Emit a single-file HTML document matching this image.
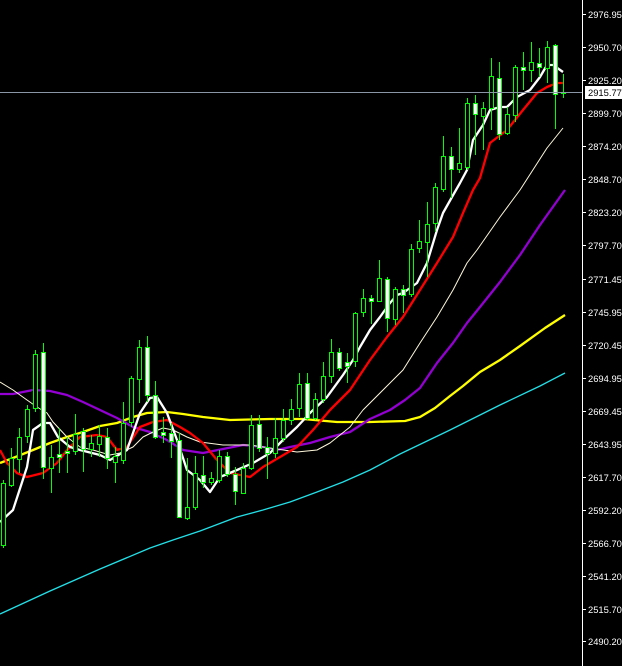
<!DOCTYPE html>
<html><head><meta charset="utf-8"><style>
html,body{margin:0;padding:0;background:#000;width:622px;height:666px;overflow:hidden}
svg{display:block}
text{font-family:"Liberation Sans","DejaVu Sans",sans-serif;font-size:9.4px;fill:#fff}
#cd,#ax{shape-rendering:crispEdges}
</style></head><body>
<svg id="s" width="622" height="666" xmlns="http://www.w3.org/2000/svg">
<rect width="622" height="666" fill="#000"/>
<g id="ma"></g>
<g id="cd"></g>
<line x1="0" y1="92.5" x2="582" y2="92.5" stroke="#8a95a5" stroke-width="1"/>
<line x1="582.5" y1="0" x2="582.5" y2="666" stroke="#fff" stroke-width="1"/>
<g id="ax"></g>
<rect x="585" y="86" width="37" height="13" fill="#fff"/>
<text x="588" y="96" style="fill:#000">2915.77</text>
</svg>
<script>
var NS="http://www.w3.org/2000/svg";
function el(p,t,a){var e=document.createElementNS(NS,t);for(var k in a)e.setAttribute(k,a[k]);p.appendChild(e);return e;}
var C=[
[3,483,545,480,548,0],[11,458,485,448,487,0],[19,437,459,428,473,0],[27,409,436,405,443,0],[35,354,408,350,412,0],
[43,352,467,343,479,1],[51,457,468,445,493,0],[59,454,457,428,473,1],[67,451,453,437,473,1],[75,434,451,414,455,0],
[83,431,449,428,472,1],[91,443,449,435,457,0],[99,436,444,425,457,0],[107,437,458,428,469,1],[115,456,462,447,483,0],
[123,423,460,402,464,0],[131,378,422,376,427,0],[139,347,379,340,403,0],[147,347,395,336,402,1],[155,395,437,381,439,1],
[163,432,435,417,443,1],[171,433,441,423,458,1],[179,440,517,433,518,1],[187,507,518,458,520,0],[195,473,507,456,510,0],
[203,475,482,456,488,1],[211,478,482,472,485,0],[219,456,480,450,483,0],[227,456,474,452,477,1],[235,474,491,467,505,1],
[243,468,493,463,494,0],[251,425,468,415,470,0],[259,424,448,415,452,1],[267,447,453,437,479,1],[275,438,453,418,458,0],
[283,420,438,409,442,0],[291,409,420,399,425,0],[299,384,408,373,417,0],[307,383,418,373,420,1],[315,399,418,393,420,0],
[323,376,399,362,403,0],[331,352,376,339,383,0],[339,352,368,348,371,1],[347,362,366,353,383,1],[355,313,361,312,367,0],
[363,298,312,289,317,0],[371,298,301,295,324,1],[379,278,301,260,302,0],[387,279,318,277,332,1],[395,289,319,287,325,0],
[403,289,295,285,313,1],[411,249,294,244,297,0],[419,241,248,220,253,0],[427,224,242,202,277,0],[435,187,223,183,232,0],
[443,156,189,136,192,0],[451,156,169,147,198,1],[459,163,169,128,173,0],[467,103,167,98,170,0],[475,103,114,95,155,1],
[483,108,116,102,150,0],[491,76,108,58,130,0],[499,78,134,62,140,1],[507,114,133,107,135,0],[515,67,115,65,122,0],
[523,67,70,52,90,1],[531,62,70,42,82,0],[539,63,67,48,77,1],[547,47,68,41,83,0],[555,45,94,44,129,1],[563,93,93,74,98,0]
];
var ma=document.getElementById("ma"),cd=document.getElementById("cd");
function line(pts,col,w){el(ma,"polyline",{points:pts.map(function(p){return p.join(",")}).join(" "),fill:"none",stroke:col,"stroke-width":w,"stroke-linejoin":"round"});}
line([[0,614],[50,591],[100,569],[150,548],[173,540],[200,531],[237,517],[263,510],[290,502],[317,492],[343,482],[370,470],[400,454],[450,430],[500,405],[540,386],[565,373]],"#22e0e8",1.3);
line([[0,463],[13,458],[33,450],[50,443],[67,437],[83,432],[100,426],[117,423],[133,417],[147,413],[167,412],[183,414],[203,417],[230,420],[270,419],[303,419],[337,422],[370,422],[405,421],[420,417],[435,408],[450,396],[463,386],[480,372],[500,360],[520,346],[545,328],[565,315]],"#ffff00",2.3);
line([[0,394],[13,394],[33,390],[50,391],[67,395],[83,402],[100,410],[117,418],[133,427],[150,432],[167,440],[183,450],[203,453],[223,449],[243,445],[263,447],[277,450],[290,447],[310,443],[330,437],[350,432],[370,419],[390,410],[405,400],[420,388],[437,363],[453,343],[467,323],[480,307],[500,282],[520,255],[540,225],[565,190]],"#9400d3",2.3);
line([[0,382],[13,390],[27,400],[37,407],[47,413],[53,422],[67,437],[80,447],[93,450],[110,455],[120,453],[133,447],[143,437],[153,432],[163,428],[173,430],[187,437],[200,442],[223,445],[250,445],[270,448],[297,452],[317,450],[330,443],[350,427],[363,410],[383,390],[403,370],[420,343],[437,317],[453,290],[467,263],[477,250],[500,217],[520,190],[547,148],[563,128]],"#fff8dc",1);
line([[0,450],[7,463],[17,473],[27,477],[43,473],[57,463],[67,450],[80,437],[97,435],[107,437],[117,450],[127,447],[140,427],[153,422],[167,420],[180,427],[190,433],[203,443],[217,460],[230,473],[250,477],[263,467],[280,457],[297,447],[313,430],[330,410],[350,390],[370,360],[387,337],[403,317],[420,290],[437,263],[453,237],[463,213],[473,190],[480,178],[490,143],[507,130],[523,110],[537,93],[547,87],[557,83],[563,83]],"#ff0000",2.3);
line([[0,522],[13,510],[27,467],[33,430],[43,423],[50,423],[58,437],[70,447],[80,450],[100,455],[110,460],[127,450],[140,413],[150,398],[157,397],[167,413],[177,440],[187,470],[200,480],[210,492],[220,477],[237,470],[253,463],[270,453],[283,440],[297,427],[310,413],[327,397],[343,375],[353,360],[360,347],[370,330],[380,317],[390,303],[397,295],[403,293],[417,283],[427,263],[437,230],[443,213],[452,197],[460,183],[467,170],[473,140],[483,125],[490,110],[500,107],[507,107],[517,97],[530,90],[540,77],[547,65],[553,65],[563,72]],"#ffffff",2.3);
C.forEach(function(c){
 var x=c[0];
 el(cd,"rect",{x:x,y:c[3],width:1,height:c[4]-c[3],fill:"#00ff00"});
 var h=c[2]-c[1];
 if(h<=1){el(cd,"rect",{x:x-2,y:c[1],width:5,height:1,fill:"#00ff00"});}
 else {el(cd,"rect",{x:x-2,y:c[1],width:5,height:h+1,fill:"#00ff00"});
       el(cd,"rect",{x:x-1,y:c[1]+1,width:3,height:h-1,fill:c[5]?"#fff":"#000"});}
});
var ax=document.getElementById("ax");
var L=[["2976.95",14],["2950.70",47],["2925.20",80],["2899.70",113],["2874.20",146],["2848.70",179],["2823.20",212],["2797.70",245],["2771.45",279],["2745.95",312],["2720.45",345],["2694.95",378],["2669.45",411],["2643.95",444],["2617.70",477],["2592.20",510],["2566.70",543],["2541.20",576],["2515.70",609],["2490.20",641]];
L.forEach(function(l){
 el(ax,"rect",{x:583,y:l[1],width:3,height:1,fill:"#fff"});
 var t=el(ax,"text",{x:588,y:l[1]+4});t.textContent=l[0];
});
</script>
</body></html>
